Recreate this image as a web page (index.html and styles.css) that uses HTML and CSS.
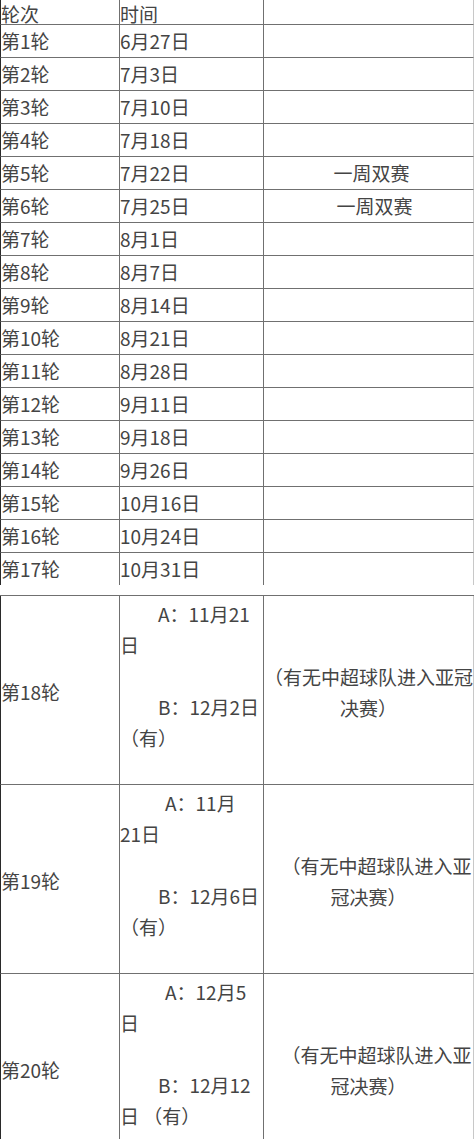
FILE: index.html
```html
<!DOCTYPE html>
<html lang="zh-CN">
<head>
<meta charset="utf-8">
<title>赛程</title>
<link rel="stylesheet" href="styles.css">
</head>
<body>
<div class="sheet">
  <div class="c c1 hd">轮次</div><div class="c c2 hd">时间</div><div class="c c3 hd"></div>
  <div class="c c1 r">第1轮</div><div class="c c2 r">6月27日</div><div class="c c3 r"></div>
  <div class="c c1 r">第2轮</div><div class="c c2 r">7月3日</div><div class="c c3 r"></div>
  <div class="c c1 r">第3轮</div><div class="c c2 r">7月10日</div><div class="c c3 r"></div>
  <div class="c c1 r">第4轮</div><div class="c c2 r">7月18日</div><div class="c c3 r"></div>
  <div class="c c1 r">第5轮</div><div class="c c2 r">7月22日</div><div class="c c3 r note"><span class="s6">一周双赛</span></div>
  <div class="c c1 r">第6轮</div><div class="c c2 r">7月25日</div><div class="c c3 r note"><span class="s12">一周双赛</span></div>
  <div class="c c1 r">第7轮</div><div class="c c2 r">8月1日</div><div class="c c3 r"></div>
  <div class="c c1 r">第8轮</div><div class="c c2 r">8月7日</div><div class="c c3 r"></div>
  <div class="c c1 r">第9轮</div><div class="c c2 r">8月14日</div><div class="c c3 r"></div>
  <div class="c c1 r">第10轮</div><div class="c c2 r">8月21日</div><div class="c c3 r"></div>
  <div class="c c1 r">第11轮</div><div class="c c2 r">8月28日</div><div class="c c3 r"></div>
  <div class="c c1 r">第12轮</div><div class="c c2 r">9月11日</div><div class="c c3 r"></div>
  <div class="c c1 r">第13轮</div><div class="c c2 r">9月18日</div><div class="c c3 r"></div>
  <div class="c c1 r">第14轮</div><div class="c c2 r">9月26日</div><div class="c c3 r"></div>
  <div class="c c1 r">第15轮</div><div class="c c2 r">10月16日</div><div class="c c3 r"></div>
  <div class="c c1 r">第16轮</div><div class="c c2 r">10月24日</div><div class="c c3 r"></div>
  <div class="c c1 r last">第17轮</div><div class="c c2 r last">10月31日</div><div class="c c3 r last"></div>
</div>

<div class="sheet sheet2">
  <div class="c c1 big mid">第18轮</div>
  <div class="c c2 big dates">
    <p class="ln ia">A：11月21</p>
    <p class="ln">日</p>
    <p class="ln"></p>
    <p class="ln ib">B：12月2日</p>
    <p class="ln">（有）</p>
  </div>
  <div class="c c3 big mid remark">
    <p class="ln">（有无中超球队进入亚冠</p>
    <p class="ln">决赛）</p>
  </div>

  <div class="c c1 big mid">第19轮</div>
  <div class="c c2 big dates">
    <p class="ln ia2">A：11月</p>
    <p class="ln">21日</p>
    <p class="ln"></p>
    <p class="ln ib">B：12月6日</p>
    <p class="ln">（有）</p>
  </div>
  <div class="c c3 big mid remark">
    <p class="ln sh">（有无中超球队进入亚</p>
    <p class="ln">冠决赛）</p>
  </div>

  <div class="c c1 big mid">第20轮</div>
  <div class="c c2 big dates">
    <p class="ln ia2">A：12月5</p>
    <p class="ln">日</p>
    <p class="ln"></p>
    <p class="ln ib">B：12月12</p>
    <p class="ln">日 （有）</p>
  </div>
  <div class="c c3 big mid remark">
    <p class="ln sh">（有无中超球队进入亚</p>
    <p class="ln">冠决赛）</p>
  </div>
</div>
</body>
</html>
```

FILE: styles.css
```css
html, body {
  margin: 0;
  padding: 0;
  background: #ffffff;
  overflow: hidden;
}

body {
  font-family: "Noto Sans CJK SC", "Noto Sans", "Liberation Sans", sans-serif;
  font-size: 19px;
  color: #444444;
}

.sheet {
  display: grid;
  grid-template-columns: 120px 144px 210px;
  width: 474px;
}

.sheet2 {
  margin-top: 10px;
  border-top: 1px solid #707070;
}

.c {
  box-sizing: border-box;
  border-right: 1px solid #707070;
  border-bottom: 1px solid #707070;
  white-space: nowrap;
}

.c1 {
  border-left: 1px solid #2a2a2a;
  padding-left: 0;
}

.c2 {
  padding-left: 0;
}

.c3 {
  border-right-color: #c8c8c8;
}

.hd {
  height: 25px;
  line-height: 28px;
}

.r {
  height: 33px;
  line-height: 32px;
}

.r.last {
  height: 32px;
  border-bottom: none;
}

.note {
  text-align: center;
}

.s6 {
  padding-left: 6px;
}

.s12 {
  padding-left: 12px;
}

.big {
  height: 189px;
}

.mid {
  display: flex;
  flex-direction: column;
  justify-content: center;
  padding-top: 3px;
}

.ln {
  margin: 0;
  height: 31px;
  line-height: 31px;
}

.dates {
  padding-top: 2px;
}

.ia {
  padding-left: 38px;
}

.ia2 {
  padding-left: 45px;
}

.ib {
  padding-left: 38px;
}

.remark {
  text-align: center;
}

.sh {
  padding-left: 16px;
}
```
